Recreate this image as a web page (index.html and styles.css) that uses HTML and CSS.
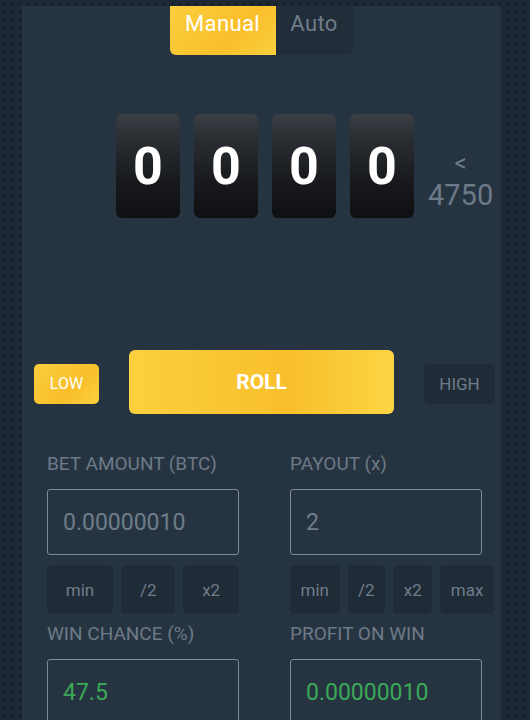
FILE: index.html
```html
<!DOCTYPE html>
<html lang="en">
<head>
    <meta charset="UTF-8">
    <meta name="viewport" content="width=device-width, initial-scale=1.0">
    <title>Dice</title>
    <link rel="stylesheet" href="styles.css">
</head>
<body>
    <div class="panel">
        <div class="tabs">
            <div class="tab active">Manual</div>
            <div class="tab">Auto</div>
        </div>

        <div class="roll-area">
            <div class="digits">
                <div class="digit">0</div>
                <div class="digit">0</div>
                <div class="digit">0</div>
                <div class="digit">0</div>
            </div>
            <div class="target">
                <span>&lt;</span>
                <span>4750</span>
            </div>
        </div>

        <div class="actions">
            <button class="side active">LOW</button>
            <button class="roll">ROLL</button>
            <button class="side">HIGH</button>
        </div>

        <div class="fields">
            <div class="field">
                <label>BET AMOUNT (BTC)</label>
                <div class="box">0.00000010</div>
                <div class="quick">
                    <button>min</button>
                    <button>/2</button>
                    <button>x2</button>
                </div>
            </div>
            <div class="field">
                <label>PAYOUT (x)</label>
                <div class="box">2</div>
                <div class="quick wide">
                    <button>min</button>
                    <button>/2</button>
                    <button>x2</button>
                    <button>max</button>
                </div>
            </div>
            <div class="field">
                <label>WIN CHANCE (%)</label>
                <div class="box green">47.5</div>
            </div>
            <div class="field">
                <label>PROFIT ON WIN</label>
                <div class="box green">0.00000010</div>
            </div>
        </div>
    </div>
</body>
</html>
```

FILE: styles.css
```css
*{
    margin: 0;
    padding: 0;
    box-sizing: border-box;
}
body{
    font-family: Roboto, "Liberation Sans", sans-serif;
    background-color: #1c2834;
    background-image: radial-gradient(#111a23 0.8px, transparent 1px);
    background-size: 8px 8px;
    height: 720px;
    overflow: hidden;
    padding: 6px 29px 0 22px;
}
.panel{
    background-color: #263441;
    height: 100%;
    padding: 0 19px 0 25px;
}
.tabs{
    display: flex;
    justify-content: center;
    margin-left: -7px;
}
.tab{
    width: 77px;
    height: 49px;
    padding-top: 5px;
    text-align: center;
    font-size: 22px;
    letter-spacing: 0.4px;
    color: #6f7d8a;
    background-color: #212d39;
    border-radius: 0 0 6px 0;
}
.tab.active{
    width: 106px;
    color: #fff;
    background: linear-gradient(135deg, #fbcf3d, #f9bf2b 60%, #fbd03e);
    border-radius: 0 0 0 6px;
}
.roll-area{
    display: flex;
    align-items: center;
    margin-top: 59px;
    padding-left: 69px;
    height: 104px;
}
.digits{
    display: flex;
    gap: 14px;
}
.digit{
    width: 64px;
    height: 104px;
    border-radius: 6px;
    background: linear-gradient(#3b3e44 0%, #2a2d32 25%, #17191c 65%, #0e0f11 100%);
    color: #fff;
    font-size: 52px;
    font-weight: bold;
    display: flex;
    align-items: center;
    justify-content: center;
}
.target{
    display: flex;
    flex-direction: column;
    align-items: center;
    margin-left: 14px;
    color: #6d7a87;
    font-size: 29px;
    line-height: 34px;
    padding-top: 28px;
}
.target span:first-child{
    font-size: 24px;
    line-height: 30px;
}
.actions{
    display: flex;
    align-items: center;
    margin-top: 132px;
    margin-left: -13px;
    margin-right: -13px;
}
button{
    font-family: inherit;
    border: none;
    cursor: pointer;
    flex-shrink: 0;
}
.side{
    height: 40px;
    margin-top: 3px;
    border-radius: 5px;
    font-size: 17px;
    color: #6f7d8a;
    background-color: #1f2b36;
    width: 71px;
}
.side.active{
    width: 65px;
    color: #fff;
    font-size: 16px;
    background: linear-gradient(135deg, #fbcf3d, #f9bf2b 60%, #fbd03e);
}
.roll{
    width: 265px;
    height: 64px;
    margin: 0 30px;
    border-radius: 6px;
    font-size: 21px;
    font-weight: bold;
    color: #fff;
    background: linear-gradient(90deg, #fbd03e, #f9bf2b 60%, #fbd544);
}
.fields{
    display: grid;
    grid-template-columns: 192px 192px;
    column-gap: 51px;
    margin-top: 38px;
}
.field label{
    display: block;
    color: #6d7a87;
    font-size: 19px;
    height: 24px;
    line-height: 24px;
}
.box{
    margin-top: 13px;
    height: 66px;
    border: 1px solid #7f8b97;
    border-radius: 3px;
    padding-left: 15px;
    display: flex;
    align-items: center;
    font-size: 23px;
    color: #6f7d8a;
}
.box.green{
    color: #3ba857;
}
.quick{
    display: flex;
    gap: 8px;
    margin-top: 10px;
    margin-bottom: 8px;
    height: 49px;
}
.quick.wide{
    width: 204px;
}
.quick button{
    flex: 1 1 auto;
    padding: 0 8px;
    border-radius: 5px;
    background-color: #1f2b36;
    color: #6f7d8a;
    font-size: 17px;
}
```
